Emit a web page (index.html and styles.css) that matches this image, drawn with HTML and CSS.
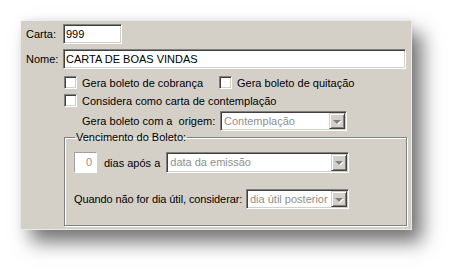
FILE: index.html
```html
<!DOCTYPE html>
<html lang="pt-BR">
<head>
    <meta charset="UTF-8">
    <meta name="viewport" content="width=device-width, initial-scale=1.0">
    <title>Carta</title>
    <link rel="stylesheet" href="styles.css">
</head>
<body>
    <div class="panel">
        <div class="field-row">
            <label class="field-label" for="carta">Carta:</label>
            <div class="text-box carta-box" id="carta">999</div>
        </div>
        <div class="field-row nome-row">
            <label class="field-label" for="nome">Nome:</label>
            <div class="text-box nome-box" id="nome">CARTA DE BOAS VINDAS</div>
        </div>

        <div class="check-row first-check">
            <span class="check-item cobranca">
                <span class="check"></span>Gera boleto de cobrança
            </span>
            <span class="check-item">
                <span class="check"></span>Gera boleto de quitação
            </span>
        </div>
        <div class="check-row">
            <span class="check-item">
                <span class="check"></span>Considera como carta de contemplação
            </span>
        </div>

        <div class="origem-row">
            <span class="origem-label">Gera boleto com a&nbsp; origem:</span>
            <div class="combo origem-combo">
                <span class="combo-text">Contemplação</span>
                <span class="combo-btn"><span class="arrow"></span></span>
            </div>
        </div>

        <fieldset class="group">
            <legend>Vencimento do Boleto:</legend>
            <div class="group-row">
                <div class="text-box dias-box">0</div>
                <span class="dias-label">dias após a</span>
                <div class="combo emissao-combo">
                    <span class="combo-text">data da emissão</span>
                    <span class="combo-btn"><span class="arrow"></span></span>
                </div>
            </div>
            <div class="group-row util-row">
                <span class="util-label">Quando não for dia útil, considerar:</span>
                <div class="combo util-combo">
                    <span class="combo-text">dia útil posterior</span>
                    <span class="combo-btn"><span class="arrow"></span></span>
                </div>
            </div>
        </fieldset>
    </div>
</body>
</html>
```

FILE: styles.css
```css
html {
    background: #fff;
}

body {
    margin: 0;
    padding: 21px 0 0 21px;
    min-height: 272px;
    box-sizing: border-box;
    font-family: "Liberation Sans", Arial, sans-serif;
    font-size: 11px;
    color: #000;
}

.panel {
    box-sizing: border-box;
    width: 391px;
    height: 209px;
    padding: 3px 0 0 5px;
    background: #d4d0c8;
    border-right: 1px solid #ebe9e5;
    border-bottom: 1px solid #ebe9e5;
    box-shadow: 10px 12px 18px rgba(0, 0, 0, 0.55), 0 -2px 6px rgba(0, 0, 0, 0.06);
}

.field-row {
    display: flex;
    align-items: center;
    height: 20px;
}

.nome-row {
    margin-top: 5px;
}

.field-label {
    width: 37px;
}

.text-box {
    box-sizing: border-box;
    height: 20px;
    padding: 3px 2px 0;
    background: #fff;
    border: 1px solid;
    border-color: #808080 #fff #fff #808080;
    box-shadow: inset 1px 1px 0 #404040, inset -1px -1px 0 #d4d0c8;
    white-space: nowrap;
}

.carta-box {
    width: 59px;
}

.nome-box {
    width: 343px;
}

.check-row {
    display: flex;
    align-items: center;
    height: 13px;
    margin: 5px 0 0 38px;
}

.first-check {
    margin-top: 7px;
}

.check-item {
    display: flex;
    align-items: center;
}

.cobranca {
    width: 155px;
}

.check {
    box-sizing: border-box;
    width: 13px;
    height: 13px;
    margin-right: 5px;
    background: #fff;
    border: 1px solid;
    border-color: #808080 #fff #fff #808080;
    box-shadow: inset 1px 1px 0 #404040, inset -1px -1px 0 #d4d0c8;
}

.origem-row {
    display: flex;
    align-items: center;
    margin: 4px 0 0 56px;
}

.origem-label {
    width: 138px;
}

.combo {
    box-sizing: border-box;
    display: flex;
    height: 20px;
    background: #fff;
    border: 1px solid;
    border-color: #808080 #fff #fff #808080;
    box-shadow: inset 1px 1px 0 #404040, inset -1px -1px 0 #d4d0c8;
    padding: 1px;
}

.combo-text {
    flex: 1;
    padding: 2px 0 0 2px;
    color: #8f8f8f;
    white-space: nowrap;
    overflow: hidden;
}

.combo-btn {
    box-sizing: border-box;
    width: 16px;
    display: flex;
    align-items: center;
    justify-content: center;
    background: #d4d0c8;
    border: 1px solid;
    border-color: #d4d0c8 #404040 #404040 #d4d0c8;
    box-shadow: inset 1px 1px 0 #fff, inset -1px -1px 0 #808080;
}

.arrow {
    width: 0;
    height: 0;
    margin-top: 1px;
    border-left: 4px solid transparent;
    border-right: 4px solid transparent;
    border-top: 4px solid #808080;
    filter: drop-shadow(1px 1px 0 #fff);
}

.origem-combo {
    width: 127px;
}

.group {
    box-sizing: border-box;
    width: 343px;
    height: 95px;
    margin: 0 0 0 38px;
    padding: 8px 0 0 9px;
    border: 1px solid #808080;
    box-shadow: inset 1px 1px 0 #fff, 1px 1px 0 #fff;
}

.group legend {
    padding: 0 1px;
    margin-left: 1px;
    line-height: 13px;
}

.group-row {
    display: flex;
    align-items: center;
}

.dias-box {
    width: 23px;
    height: 21px;
    text-align: right;
    padding: 3px 4px 0 2px;
    color: #8f8f8f;
    border-color: #a0a0a0 #fff #fff #a0a0a0;
    box-shadow: none;
}

.dias-label {
    margin: 0 6px 0 7px;
}

.emissao-combo {
    width: 183px;
    height: 21px;
}

.util-row {
    margin-top: 16px;
}

.util-label {
    width: 172px;
    letter-spacing: -0.1px;
}

.util-combo {
    width: 103px;
}
```
